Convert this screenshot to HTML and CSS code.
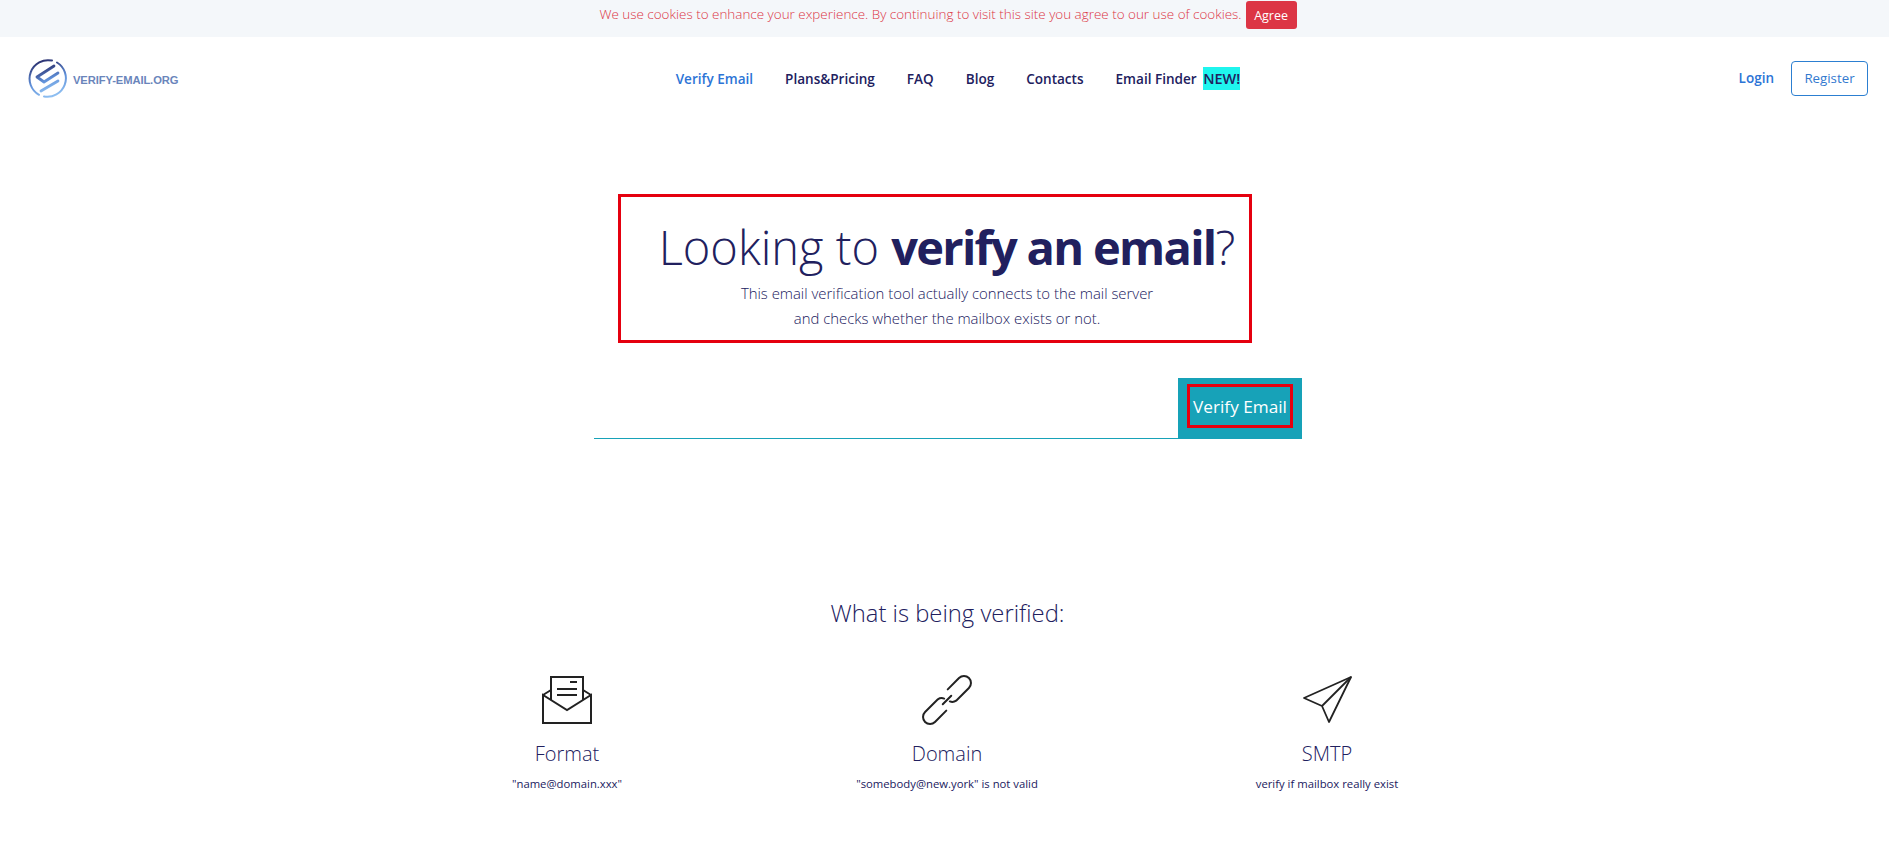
FILE: index.html
```html
<!DOCTYPE html>
<html lang="en">
<head>
<meta charset="utf-8">
<title>Verify Email</title>
<link rel="stylesheet" href="styles.css">
</head>
<body>
<div class="cookie">
  <span class="cookie-text">We use cookies to enhance your experience. By continuing to visit this site you agree to our use of cookies.</span>
  <button class="agree">Agree</button>
</div>
<header class="header">
  <a class="logo" href="#">
    <svg class="logo-mark" viewBox="0 0 40 40" width="40" height="40">
      <defs>
        <linearGradient id="lg" x1="0.3" y1="0" x2="0.6" y2="1">
          <stop offset="0" stop-color="#2a2f6e"/>
          <stop offset="0.55" stop-color="#5f8fd8"/>
          <stop offset="1" stop-color="#8fc0f2"/>
        </linearGradient>
      </defs>
      <g fill="none" stroke="url(#lg)" stroke-linecap="round">
        <path stroke-width="2" d="M25 2.600A18.500 18.500 0 0 0 12 36.800M30 4.500A18.500 18.500 0 0 1 17 38.500"/>
        <path stroke-width="2.800" stroke-linejoin="round" d="M10 19L27 8M10 19L17 24L31 15M14 33L31 23"/>
      </g>
    </svg>
    <span class="logo-text">VERIFY-EMAIL.ORG</span>
  </a>
  <nav class="nav">
    <a class="nav-link active" href="#">Verify Email</a>
    <a class="nav-link" href="#">Plans&amp;Pricing</a>
    <a class="nav-link" href="#">FAQ</a>
    <a class="nav-link" href="#">Blog</a>
    <a class="nav-link" href="#">Contacts</a>
    <a class="nav-link" href="#">Email Finder <mark class="new">NEW!</mark></a>
  </nav>
  <div class="auth">
    <a class="login" href="#">Login</a>
    <a class="register" href="#">Register</a>
  </div>
</header>
<main>
  <section class="hero">
    <h1 class="title">Looking to <b>verify an email</b>?</h1>
    <p class="lead">This email verification tool actually connects to the mail server<br>and checks whether the mailbox exists or not.</p>
  </section>
  <form class="verify">
    <input class="email" type="text" aria-label="Email">
    <div class="submit"><span class="submit-label">Verify Email</span></div>
  </form>
  <h2 class="what">What is being verified:</h2>
  <section class="features">
    <div class="feature">
      <svg class="icon" viewBox="0 0 50 50" width="50" height="50" fill="none" stroke="#222" stroke-width="2">
        <path d="M1 20V48H49V20L25 35Z"/>
        <path d="M9 25V2H41V25"/>
        <path d="M9 15L1 20M41 15L49 20"/>
        <path d="M28 7H35M15 14H35M15 20H35"/>
      </svg>
      <h3 class="feature-title">Format</h3>
      <p class="feature-sub">"name@domain.xxx"</p>
    </div>
    <div class="feature">
      <svg class="icon" viewBox="0 0 50 50" width="50" height="50" fill="none" stroke="#222" stroke-width="2" stroke-linecap="round">
        <g transform="rotate(-45 25 25)">
          <path d="M24 22A7 7 0 0 0 19 18H1A7 7 0 0 0 1 32H17"/>
          <path d="M26 28A7 7 0 0 0 31 32H49A7 7 0 0 0 49 18H33"/>
          <path d="M19 25H31"/>
        </g>
      </svg>
      <h3 class="feature-title">Domain</h3>
      <p class="feature-sub">"somebody@new.york" is not valid</p>
    </div>
    <div class="feature">
      <svg class="icon" viewBox="0 0 50 50" width="50" height="50" fill="none" stroke="#222" stroke-width="1.800" stroke-linejoin="round">
        <path d="M49 2L2 23L20 31L27 47Z"/>
        <path d="M49 2L20 31"/>
      </svg>
      <h3 class="feature-title">SMTP</h3>
      <p class="feature-sub">verify if mailbox really exist</p>
    </div>
  </section>
</main>
</body>
</html>
```
FILE: styles.css
```css
* { box-sizing: border-box; }
html, body { margin: 0; padding: 0; }
body {
  background: #fff;
  color: #21205e;
  font-family: "Open Sans", "Noto Sans", sans-serif;
  height: 852px;
  overflow: hidden;
}
a { text-decoration: none; }

.cookie {
  height: 37px;
  background: #f4f7fa;
  display: flex;
  justify-content: center;
  align-items: flex-start;
  gap: 4px;
  padding: 1px 0 0 7px;
}
.cookie-text {
  color: #dc3545;
  font-size: 13.450px;
  line-height: 26px;
  font-weight: 300;
}
.agree {
  background: #dc3545;
  color: #fff;
  border: 0;
  border-radius: 3px;
  width: 51px;
  height: 28px;
  font: 400 12.500px "Open Sans", sans-serif;
  padding: 0;
}

.header {
  height: 82px;
  display: grid;
  grid-template-columns: 1fr auto 1fr;
  align-items: center;
  padding: 0 21px 0 27px;
}
.logo { display: flex; align-items: center; gap: 6px; }
.logo-mark { display: block; }
.logo-text {
  color: #6a85bb;
  font: 700 11.200px "Liberation Sans", sans-serif;
  letter-spacing: -0.100px;
  margin-top: 3px;
}
.nav { display: flex; gap: 32px; align-items: baseline; margin: 1px 0 0 21px; }
.nav-link {
  color: #21205e;
  font-size: 13.550px;
  font-weight: 600;
  white-space: nowrap;
}
.nav-link.active { color: #2c74d6; }
.new {
  background: #1ff5ee;
  color: #21205e;
  padding: 2px 0;
  margin-left: 3px;
  font-size: 14.500px;
}
.auth { display: flex; justify-content: flex-end; align-items: center; gap: 17px; }
.login { color: #2c74d6; font-size: 13.500px; font-weight: 600; }
.register {
  color: #3279cf;
  border: 1px solid #2c7fd1;
  border-radius: 4px;
  width: 77px;
  height: 35px;
  display: flex;
  align-items: center;
  justify-content: center;
  font-size: 13.300px;
}

main { display: block; }
.hero {
  width: 634px;
  height: 149px;
  margin: 75px 0 0 618px;
  border: 3px solid #e5000f;
  text-align: center;
  padding: 16px 0 0 24px;
}
.title {
  margin: 0;
  font-size: 47px;
  line-height: 68px;
  font-weight: 300;
  white-space: nowrap;
}
.title b { font-weight: 700; letter-spacing: -1.700px; }
.lead {
  margin: 0;
  font-size: 14.900px;
  line-height: 25px;
  font-weight: 300;
}
.verify {
  width: 708px;
  margin: 35px 0 0 594px;
  display: flex;
  height: 61px;
}
.email {
  flex: 1;
  border: 0;
  border-bottom: 1px solid #17a2b8;
  outline: 0;
  background: transparent;
}
.submit {
  width: 124px;
  background: #17a2b8;
  display: flex;
  align-items: flex-start;
  justify-content: center;
  padding-top: 6px;
}
.submit-label {
  width: 106px;
  height: 44px;
  border: 3px solid #e5000f;
  color: #fff;
  font-size: 17.200px;
  display: flex;
  align-items: center;
  justify-content: center;
  white-space: nowrap;
  padding-top: 1px;
}
.what {
  margin: 156px 0 0;
  padding-left: 6px;
  text-align: center;
  font-size: 23.800px;
  line-height: 36px;
  font-weight: 300;
}
.features {
  width: 1140px;
  margin: 44px 0 0 377px;
  display: grid;
  grid-template-columns: repeat(3, 1fr);
  text-align: center;
}
.feature { display: flex; flex-direction: column; align-items: center; }
.icon { display: block; }
.feature-title {
  margin: 15px 0 0;
  font-size: 20px;
  line-height: 28px;
  font-weight: 300;
}
.feature-sub {
  margin: 8px 0 0;
  font-size: 11.300px;
  line-height: 16px;
  font-weight: 400;
}
```
